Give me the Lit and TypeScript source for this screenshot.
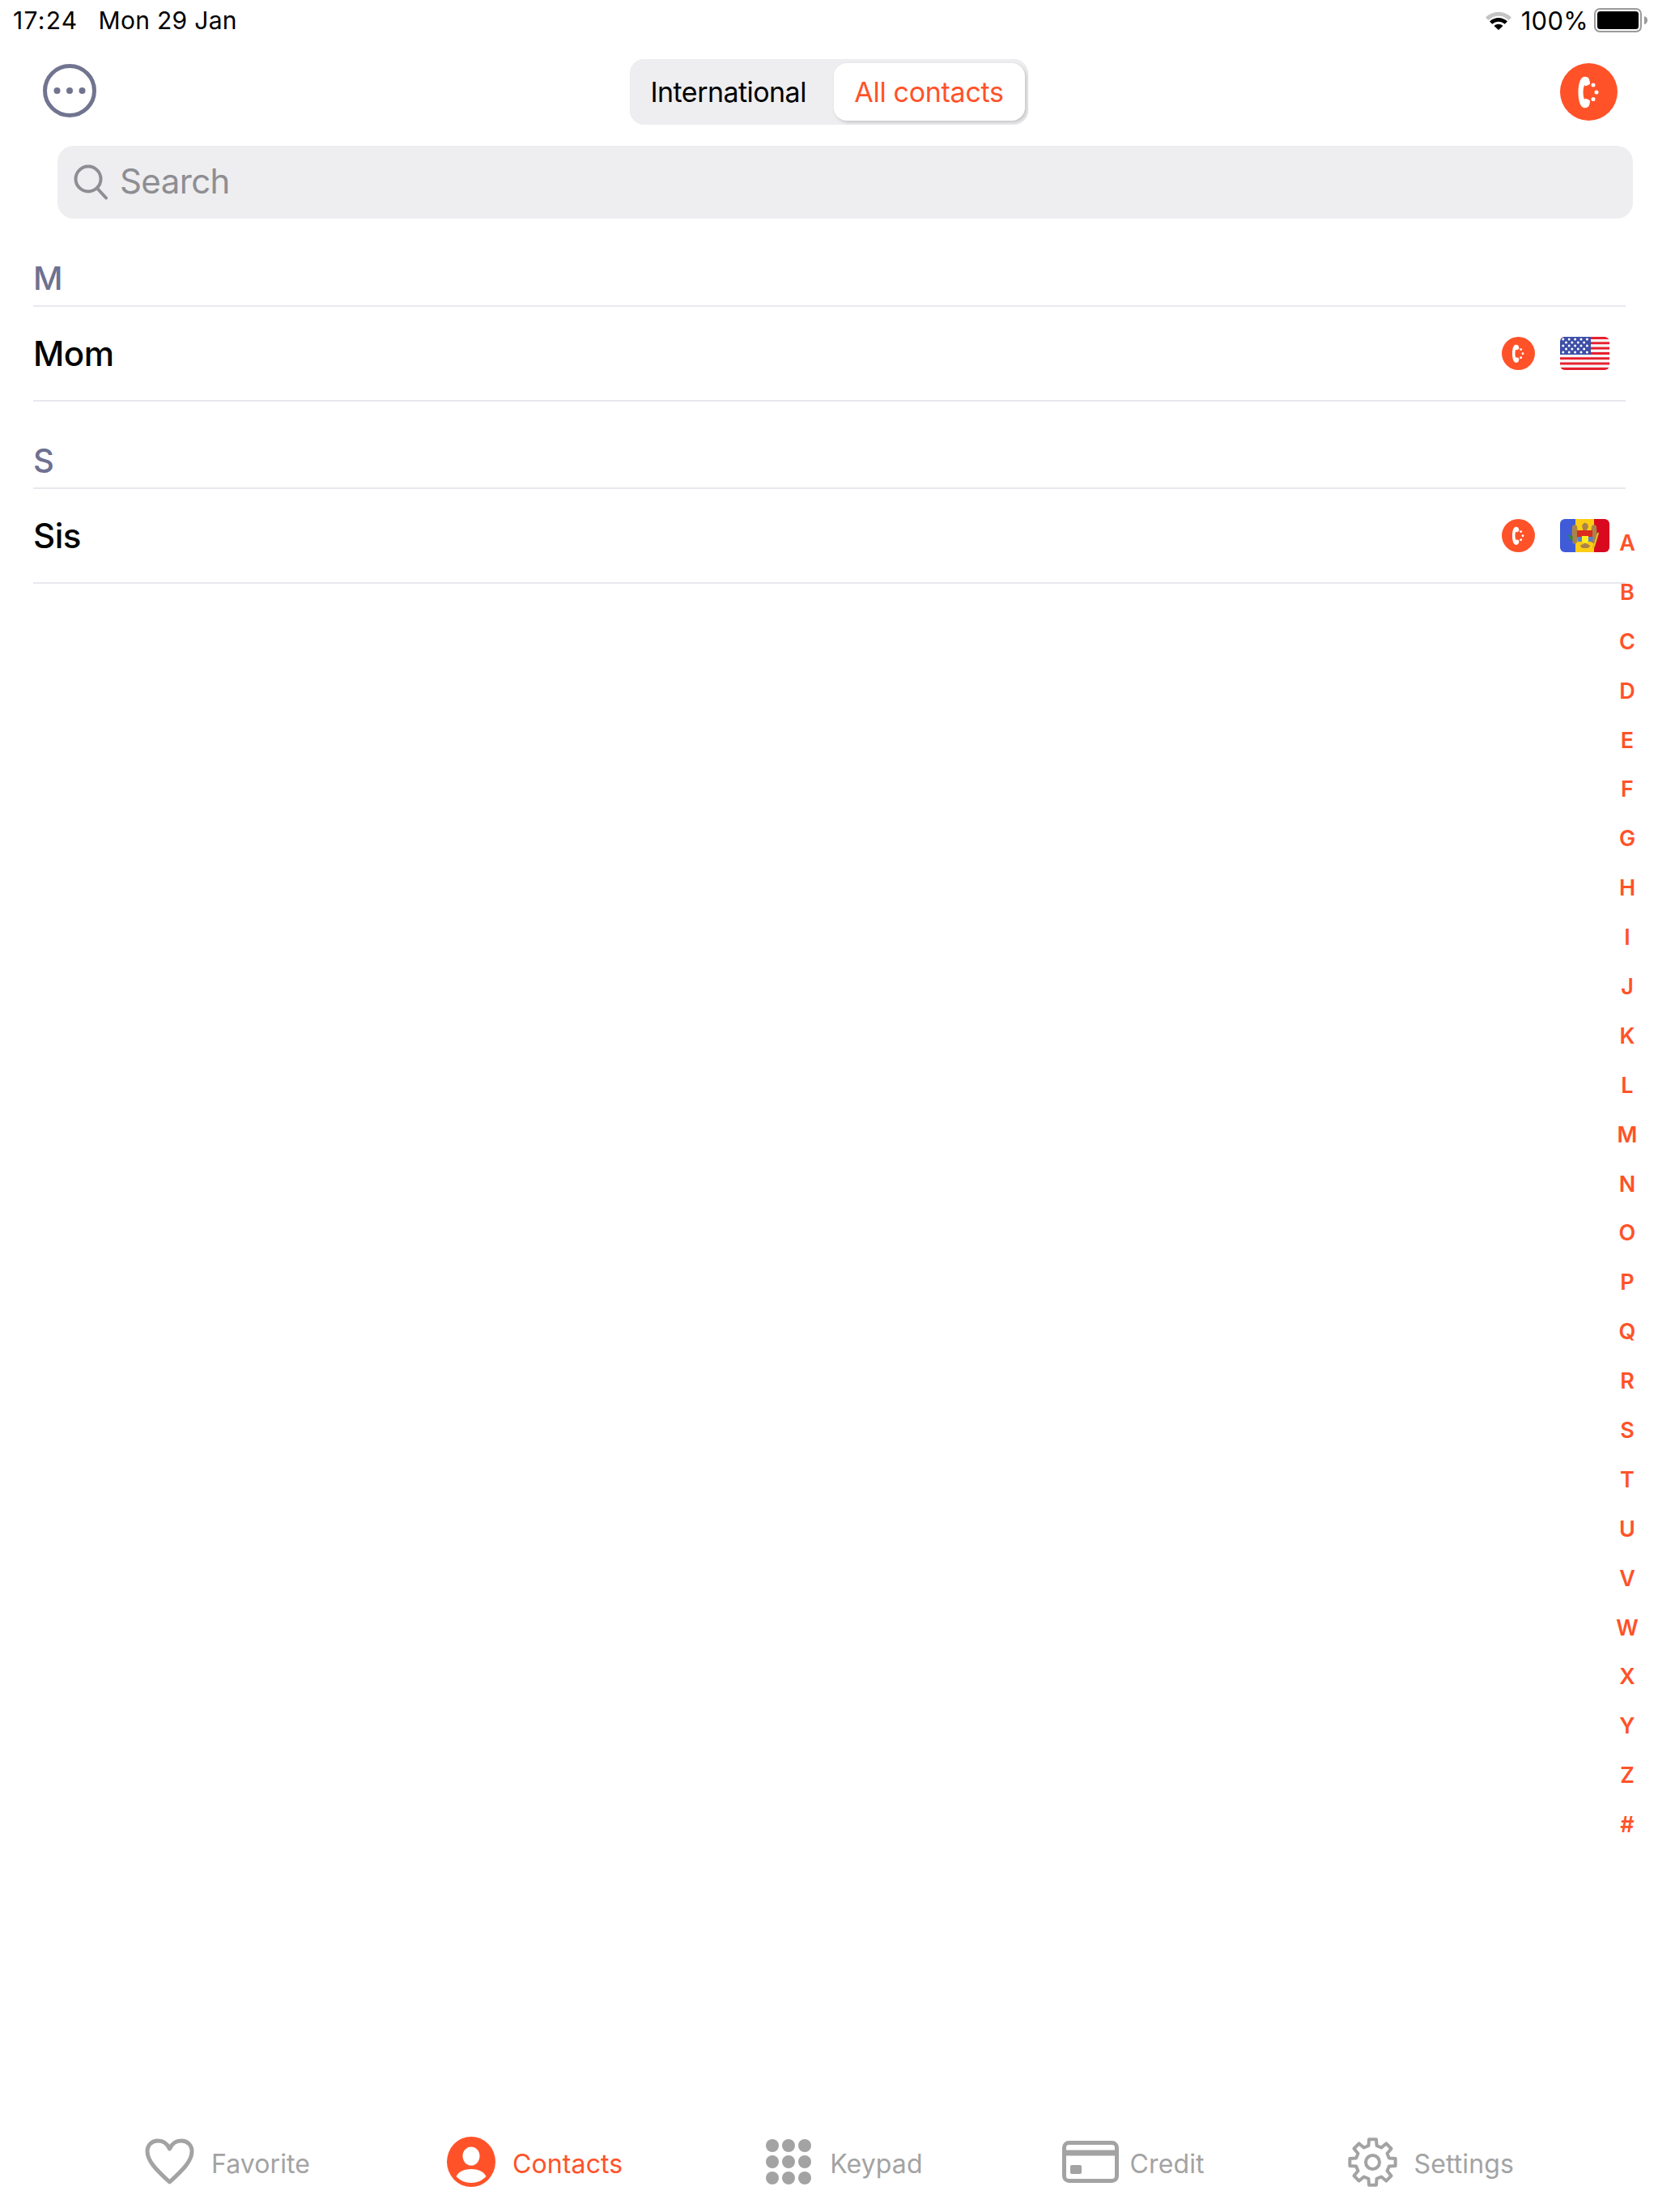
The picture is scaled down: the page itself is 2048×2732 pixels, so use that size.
import { LitElement, html, css, svg } from "lit";
import { customElement } from "lit/decorators.js";

const LETTERS = "ABCDEFGHIJKLMNOPQRSTUVWXYZ#".split("");

const phone = svg`<path d="M29 17C25 18 22.500 26 22.500 36S25 54 29 55C32 55.800 35.500 54.500 36 52L37 48C37.300 46.500 36.500 45.500 35 45L32.500 44C31.300 43.500 30.500 44 30 45C29 42 28.500 39 28.500 36S29 30 30 27C30.500 28 31.300 28.500 32.500 28L35 27C36.500 26.500 37.300 25.500 37 24L36 20C35.500 17.500 32 16.200 29 17Z" fill="#fff"/><circle cx="41" cy="27" r="2.500" fill="#fff"/><circle cx="45" cy="36" r="2.500" fill="#fff"/><circle cx="41" cy="44.500" r="2.500" fill="#fff"/>`;

function callIcon(cls: string) {
  return html`<svg class=${cls} viewBox="0 0 71 71"><circle cx="35.500" cy="35.500" r="35.500" fill="#ff5229"/>${phone}</svg>`;
}

function gearPath(cx: number, outer: number, inner: number) {
  const pts: string[] = [];
  const pt = (r: number, deg: number) => {
    const a = (deg * Math.PI) / 180;
    return `${(cx + r * Math.sin(a)).toFixed(2)} ${(cx - r * Math.cos(a)).toFixed(2)}`;
  };
  for (let i = 0; i < 8; i++) {
    const m = i * 45;
    pts.push(pt(inner, m - 14), pt(outer, m - 9), pt(outer, m + 9), pt(inner, m + 14));
  }
  return `M${pts.join("L")}Z`;
}

function usFlag() {
  const stripes = [];
  for (let i = 0; i < 13; i++) {
    stripes.push(svg`<rect x="0" y=${(i * 41) / 13} width="61" height=${41 / 13} fill=${i % 2 ? "#f6f6f8" : "#e6202e"}/>`);
  }
  const stars = [];
  for (let r = 0; r < 5; r++) {
    const n = r % 2 ? 4 : 5;
    for (let c = 0; c < n; c++) {
      stars.push(svg`<circle cx=${(r % 2 ? 7.500 : 3.800) + c * 7.400} cy=${3 + r * 4} r="1.500" fill="#fff"/>`);
    }
  }
  return html`<svg class="flag" viewBox="0 0 61 41">
    ${stripes}<rect width="38" height="22" fill="#3c4fa8"/>${stars}
  </svg>`;
}

function mdFlag() {
  return html`<svg class="flag" viewBox="0 0 61 41">
    <rect width="19.500" height="41" fill="#3f5bd8"/>
    <rect x="19" width="23" height="41" fill="#fdcd16"/>
    <rect x="42" width="19" height="41" fill="#d90a20"/>
    <path d="M15 9c1-2.500 5-2.500 6 0 .8 4 .6 12 .3 20l-5.300 2c-1.200-7-1.800-15-1-22zM45 9c-1-2.500-5-2.500-6 0-.8 4-.6 12-.3 20l5.300 2c1.200-7 1.800-15 1-22z" fill="#a9834a"/>
    <path d="M27 8l3-3.500 4 1.500 1 4-2.500 4.500h-4z" fill="#a9834a"/>
    <rect x="21" y="14" width="19" height="8" fill="#dc2a1e"/>
    <path d="M27 21h8v5c0 2-2 3.500-4 4.500-2-1-4-2.500-4-4.500z" fill="#fff01c"/>
    <path d="M21 22h6v6h-5zM35 22h6l-1 6h-5z" fill="#5c7fc8"/>
    <path d="M24.500 33l6.500-3.500 6.500 3.500-3 3h-7z" fill="#a9834a"/>
    <path d="M10 19l6 3-1 3 1.500 2.500-5-3z" fill="#2f8a3a"/>
    <path d="M48 17l-5.500 18h-2l5.500-18z" fill="#f2d32a" stroke="#b08a20" stroke-width=".5"/>
  </svg>`;
}

@customElement("app-root")
export class AppRoot extends LitElement {
  static styles = css`
    :host {
      display: flex;
      flex-direction: column;
      position: relative;
      width: 2048px;
      height: 2732px;
      background: #fff;
      color: #000;
      font-family: Inter, "Liberation Sans", sans-serif;
      overflow: hidden;
    }
    .status {
      display: flex;
      align-items: center;
      height: 50px;
      padding: 0 13px 0 16px;
      font-size: 30px;
      letter-spacing: 0.3px;
    }
    .status .time { letter-spacing: 1.300px; }
    .status .date { margin-left: 25px; }
    .status .right { margin-left: auto; display: flex; align-items: center; }
    .status .pct { margin: 0 7px 0 11px; font-size: 31px; }
    .wifi { width: 34px; height: 24px; }
    .battery { width: 66px; height: 30px; }
    .nav {
      display: flex;
      align-items: center;
      justify-content: space-between;
      height: 81px;
      margin-top: 23px;
      padding: 0 50px 0 53px;
    }
    .more { width: 66px; height: 66px; margin-bottom: 3px; }
    .seg {
      display: flex;
      align-items: center;
      box-sizing: border-box;
      width: 492px;
      height: 81px;
      background: #eeeef0;
      border-radius: 18px;
      padding: 0 4px 0 26px;
      margin-left: 1px;
      font-size: 34px;
      box-shadow: inset 0 0 0 1px #ececef;
    }
    .seg .intl { width: 226px; letter-spacing: -0.55px; }
    .seg .all {
      display: flex;
      align-items: center;
      justify-content: center;
      width: 236px;
      height: 71px;
      background: #fff;
      color: #ff5229;
      border-radius: 16px;
      letter-spacing: -0.3px;
      box-shadow: 2px 2px 4px rgba(0, 0, 0, 0.18);
    }
    .call-lg { width: 71px; height: 71px; display: block; }
    .call-sm { width: 41px; height: 41px; display: block; }
    .search {
      display: flex;
      align-items: center;
      height: 90px;
      margin: 26px 31px 0 71px;
      padding-left: 20px;
      background: #eeeef0;
      border-radius: 20px;
      color: #8e8e93;
      font-size: 42px;
      letter-spacing: -0.6px;
    }
    .search span { padding-bottom: 3px; }
    .search svg { width: 42px; height: 44px; margin-right: 15px; }
    .list { margin: 0 40px 0 41px; padding-top: 1px; }
    .head {
      height: 63px;
      box-sizing: border-box;
      display: flex;
      align-items: flex-end;
      padding: 0 0 11px 0;
      color: #6e7191;
      font-size: 40px;
      font-weight: 500;
      line-height: 44px;
      border-bottom: 2px solid #e8e8ee;
      margin-top: 45px;
    }
    .row {
      display: flex;
      align-items: center;
      height: 115px;
      border-bottom: 2px solid #e8e8ee;
      font-size: 42px;
      font-weight: 500;
      letter-spacing: -0.5px;
    }
    .row .name { flex: 1; }
    .flag { width: 61px; height: 41px; margin: 0 20px 0 31px; border-radius: 6px; display: block; }
    .index {
      position: absolute;
      right: 13px;
      top: 641px;
      width: 50px;
      display: flex;
      flex-direction: column;
      align-items: center;
      color: #ff5229;
      font-size: 27px;
      font-weight: 600;
    }
    .index span { height: 60.900px; line-height: 60.900px; }
    .tabs {
      display: flex;
      align-items: center;
      height: 62px;
      margin-top: auto;
      margin-bottom: 31px;
      padding-left: 179px;
      color: #a3a3a3;
      font-size: 32px;
      letter-spacing: 0.1px;
    }
    .tab { display: flex; align-items: center; gap: 21px; }
    .tab span { padding-top: 4px; }
    .tab.active { color: #ff5229; margin-left: 169px; }
    .tab.keypad { gap: 23px; margin-left: 177px; }
    .tab.credit { gap: 14px; margin-left: 172px; }
    .tab.settings { margin-left: 177px; }
    .tab svg { display: block; }
  `;

  render() {
    return html`
      <div class="status">
        <span class="time">17:24</span><span class="date">Mon 29 Jan</span>
        <div class="right">
          <svg class="wifi" viewBox="0 0 34 24">
            <path d="M1 8.500C10 -.5 24 -.5 33 8.500l-3.500 3.500C22.500 5 11.500 5 4.500 12z" fill="#c4c4c4"/>
            <path d="M6 13.500c6-6 16-6 22 0l-3.300 3.300c-4.500-4-10.900-4-15.400 0z" fill="#000"/>
            <path d="M11.500 19c3-3 8-3 11 0L17 24z" fill="#000"/>
          </svg>
          <span class="pct">100%</span>
          <svg class="battery" viewBox="0 0 66 30">
            <rect x="1" y="1" width="57" height="28" rx="6" fill="none" stroke="#9a9a9a" stroke-width="2"/>
            <rect x="4" y="4" width="51" height="22" rx="3.500" fill="#000"/>
            <path d="M62 10c2.500.5 4 2.500 4 5s-1.500 4.500-4 5z" fill="#9a9a9a"/>
          </svg>
        </div>
      </div>

      <div class="nav">
        <svg class="more" viewBox="0 0 66 66">
          <circle cx="33" cy="33" r="30.500" fill="none" stroke="#71748f" stroke-width="5"/>
          <circle cx="17.500" cy="33" r="4" fill="#71748f"/>
          <circle cx="33" cy="33" r="4" fill="#71748f"/>
          <circle cx="48.500" cy="33" r="4" fill="#71748f"/>
        </svg>
        <div class="seg">
          <span class="intl">International</span>
          <span class="all">All contacts</span>
        </div>
        ${callIcon("call-lg")}
      </div>

      <div class="search">
        <svg viewBox="0 0 42 44" fill="none" stroke="#8e8e93" stroke-width="4" stroke-linecap="round">
          <circle cx="18" cy="18" r="15.500"/><path d="M29.500 30L40 41.500"/>
        </svg>
        <span>Search</span>
      </div>

      <div class="list">
        <div class="head">M</div>
        <div class="row"><span class="name">Mom</span>${callIcon("call-sm")}${usFlag()}</div>
        <div class="head">S</div>
        <div class="row"><span class="name">Sis</span>${callIcon("call-sm")}${mdFlag()}</div>
      </div>

      <div class="index">${LETTERS.map((l) => html`<span>${l}</span>`)}</div>

      <div class="tabs">
        <div class="tab">
          <svg width="61" height="58" viewBox="0 0 61 58" fill="none" stroke="#a3a3a3" stroke-width="5" stroke-linejoin="round">
            <path d="M30.500 54C14 39 3 28 3 16 3 8 9 3 16 3c6 0 11.500 3 14.500 10C33.500 6 39 3 45 3c7 0 13 5 13 13 0 12-11 23-27.500 38z"/>
          </svg>
          <span>Favorite</span>
        </div>
        <div class="tab active">
          <svg width="60" height="62" viewBox="0 0 60 62">
            <ellipse cx="30" cy="31" rx="30" ry="31" fill="#ff5229"/>
            <ellipse cx="30" cy="24" rx="10.500" ry="11.500" fill="#fff"/>
            <path d="M11.500 49c3-6 10-9 18.500-9s15.500 3 18.500 9C44 54 37.500 57 30 57s-14-3-18.500-8z" fill="#fff"/>
          </svg>
          <span>Contacts</span>
        </div>
        <div class="tab keypad">
          <svg width="56" height="57" viewBox="0 0 56 57" fill="#a3a3a3">
            ${[8, 28, 48].map((cy) =>
              [8, 28, 48].map((cx) => svg`<circle cx=${cx} cy=${cy} r="8"/>`)
            )}
          </svg>
          <span>Keypad</span>
        </div>
        <div class="tab credit">
          <svg width="70" height="52" viewBox="0 0 70 52" fill="none" stroke="#a3a3a3">
            <rect x="2.500" y="2.500" width="65" height="47" rx="6" stroke-width="5"/>
            <path d="M2 15h66" stroke-width="7"/>
            <rect x="10" y="30" width="14" height="11" rx="2" fill="#a3a3a3" stroke="none"/>
          </svg>
          <span>Credit</span>
        </div>
        <div class="tab settings">
          <svg width="61" height="61" viewBox="0 0 61 61" fill="none" stroke="#a3a3a3" stroke-width="4" stroke-linejoin="round">
            <path d=${gearPath(30.5, 28.5, 21)}/>
            <circle cx="30.500" cy="30.500" r="8.500" stroke-width="4"/>
          </svg>
          <span>Settings</span>
        </div>
      </div>
    `;
  }
}
